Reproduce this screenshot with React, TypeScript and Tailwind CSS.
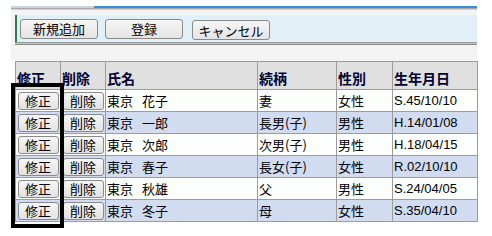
import React from "react";

type Row = { last: string; first: string; rel: string; sex: string; birth: string };

const rows: Row[] = [
  { last: "東京", first: "花子", rel: "妻", sex: "女性", birth: "S.45/10/10" },
  { last: "東京", first: "一郎", rel: "長男(子)", sex: "男性", birth: "H.14/01/08" },
  { last: "東京", first: "次郎", rel: "次男(子)", sex: "男性", birth: "H.18/04/15" },
  { last: "東京", first: "春子", rel: "長女(子)", sex: "女性", birth: "R.02/10/10" },
  { last: "東京", first: "秋雄", rel: "父", sex: "男性", birth: "S.24/04/05" },
  { last: "東京", first: "冬子", rel: "母", sex: "女性", birth: "S.35/04/10" },
];

const font = { fontFamily: '"Noto Sans CJK JP", "Liberation Sans", sans-serif' };

function ToolButton({ label }: { label: string }) {
  return (
    <button className="w-[78px] h-[20px] border border-[#8a8a8a] rounded-[3px] bg-gradient-to-b from-[#f6f6f6] to-[#e4e4e4] text-[13px] leading-none text-black">
      {label}
    </button>
  );
}

function CellButton({ label }: { label: string }) {
  return (
    <button className="w-[41px] h-[18px] border border-[#8a8a8a] rounded-[3px] bg-gradient-to-b from-[#f6f6f6] to-[#e2e2e2] text-[13px] leading-none text-black">
      {label}
    </button>
  );
}

export default function App() {
  return (
    <div className="relative w-[492px] h-[236px] bg-white overflow-hidden" style={font}>
      <div className="ml-[11px] mt-[6px] w-[466px]">
        {/* 上部ライン */}
        <div className="flex h-[2px]">
          <div className="w-[83px] bg-[#c8d4dc]" />
          <div className="flex-1 bg-[#3b8fd2]" />
        </div>
        <div className="h-[1px] bg-[#a8a8a8]" />
        <div className="h-[1px] bg-[#d0d0d0]" />

        <div className="bg-[#f3f3f3] pt-[5px] pb-[16px]">
          {/* ツールバー */}
          <div className="ml-[4px] bg-[#e0f0f6] border-l-2 border-[#2e7d4f] h-[27px] flex items-center gap-[7px] pl-[3px]">
            <ToolButton label="新規追加" />
            <ToolButton label="登録" />
            <div className="ml-[2px]">
              <ToolButton label="キャンセル" />
            </div>
          </div>
          <div className="ml-[4px] h-[1px] bg-[#9a9a9a]" />
          <div className="ml-[4px] h-[1px] bg-[#c4c4c4]" />
          <div className="ml-[4px] h-[1px] bg-[#8a8a8a]" />
        </div>

        {/* 一覧テーブル */}
        <table className="ml-[4px] border-collapse table-fixed w-[462px]">
          <colgroup>
            <col className="w-[45px]" />
            <col className="w-[45px]" />
            <col className="w-[152px]" />
            <col className="w-[79px]" />
            <col className="w-[56px]" />
            <col className="w-[85px]" />
          </colgroup>
          <thead>
            <tr className="h-[28px] bg-[#e0e0e0] text-[#000030]">
              {["修正", "削除", "氏名", "続柄", "性別", "生年月日"].map((h) => (
                <th
                  key={h}
                  className="border border-[#9c9c9c] text-left pl-[1px] pt-[4px] font-bold text-[14px] leading-none"
                >
                  {h}
                </th>
              ))}
            </tr>
          </thead>
          <tbody>
            {rows.map((r, i) => (
              <tr key={i} className={`h-[22px] ${i % 2 === 0 ? "bg-[#fcfffc]" : "bg-[#d1dcf1]"}`}>
                <td className="border border-[#9c9c9c] p-0 align-middle">
                  <div className="flex justify-center">
                    <CellButton label="修正" />
                  </div>
                </td>
                <td className="border border-[#9c9c9c] p-0 align-middle">
                  <div className="flex justify-center">
                    <CellButton label="削除" />
                  </div>
                </td>
                <td className="border border-[#9c9c9c] pl-[1px] text-[13px] leading-none">
                  {r.last}
                  <span className="ml-[9px]">{r.first}</span>
                </td>
                <td className="border border-[#9c9c9c] pl-[1px] text-[13px] leading-none">{r.rel}</td>
                <td className="border border-[#9c9c9c] pl-[1px] text-[13px] leading-none">{r.sex}</td>
                <td
                  className="border border-[#9c9c9c] pl-[1px] text-[13px] leading-none"
                  style={{ fontFamily: '"Liberation Sans", sans-serif' }}
                >
                  {r.birth}
                </td>
              </tr>
            ))}
          </tbody>
        </table>
      </div>

      {/* 修正列の選択枠 */}
      <div className="absolute left-[11px] top-[83px] w-[53px] h-[145px] border-4 border-black pointer-events-none" />
    </div>
  );
}
